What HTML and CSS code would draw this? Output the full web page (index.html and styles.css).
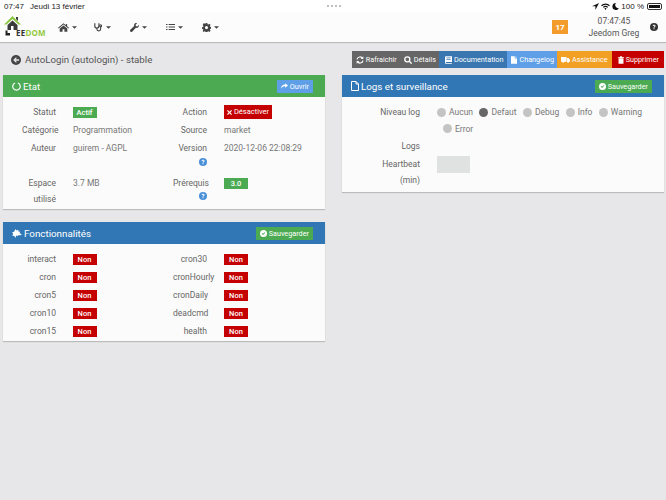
FILE: index.html
```html
<!DOCTYPE html>
<html lang="fr">
<head>
<meta charset="utf-8">
<title>AutoLogin</title>
<link rel="stylesheet" href="styles.css">
</head>
<body>
<svg class="defs" width="0" height="0" aria-hidden="true">
  <symbol id="caret" viewBox="0 0 8 4"><path d="M0 0h8L4 4z"/></symbol>
  <symbol id="help" viewBox="0 0 16 16"><circle cx="8" cy="8" r="8"/><path d="M5.200 6.200C5.400 4.400 6.600 3.500 8.200 3.500c1.700 0 2.900 1 2.900 2.400 0 1.300-.8 1.800-1.500 2.300-.5.400-.7.600-.7 1.300H7.100c0-1.300.3-1.800 1.100-2.400.6-.4.900-.7.900-1.100 0-.5-.4-.8-1-.8-.7 0-1 .4-1.100 1zM7 10.500h2v2H7z" fill="#fff"/></symbol>
  <symbol id="check" viewBox="0 0 16 16"><circle cx="8" cy="8" r="8" fill="#fff"/><path d="M4 8.300l1.500-1.500 1.600 1.600 3.400-3.400L12 6.500l-4.900 4.900z" class="check-mark"/></symbol>
</svg>

<div class="status-bar">
  <span class="status-time">07:47</span>
  <span class="status-date">Jeudi 13 février</span>
  <span class="status-dots"><i></i><i></i><i></i><i></i></span>
  <span class="status-right">
    <svg width="7" height="7" viewBox="0 0 8 8"><path d="M8 0L0 3.600h3.900V8z"/></svg>
    <svg width="9" height="7" viewBox="0 0 10 8"><path d="M0 2.600a7 7 0 0 1 10 0l-.9 1a5.700 5.700 0 0 0-8.200 0zM2 4.500a4.300 4.300 0 0 1 6 0l-.9 1a3 3 0 0 0-4.200 0zM3.700 6.300a1.800 1.800 0 0 1 2.600 0L5 8z"/></svg>
    <svg width="7" height="7" viewBox="0 0 8 8"><path d="M4.500 0a4 4 0 1 0 3.500 5.800A3.600 3.600 0 0 1 4.500 0z"/></svg>
    <span>100 %</span>
    <span class="battery"><b></b></span>
  </span>
</div>

<header class="nav">
  <div class="logo">
    <svg class="logo-mark" width="18" height="21" viewBox="0 0 18 21"><path d="M8.500 0L0 8.500h2.500L8.500 3l6 5.500H17z" fill="#8cc63f"/><path d="M3.500 9l5-4.500 5 4.500v5h-10z" fill="#3a3a3a"/><path d="M12 1h2v4l-2-2z" fill="#3a3a3a"/><path d="M1.500 14.500h2v2.500h2.500v2.500H1.500z" fill="#222"/><path d="M7 10h2.500v5H7z" fill="#fff"/></svg>
    <span class="logo-text"><span class="logo-dark">EE</span><span class="logo-green">DOM</span></span>
  </div>
  <nav class="menu">
    <span class="menu-item"><svg width="11" height="9" viewBox="0 0 13 10"><path d="M6.500 0L0 5.300l.7.800 5.800-4.700 5.800 4.700.7-.8-2.200-1.800V.8H9.300v1.500zM2 6.200V10h3.400V7.200h2.200V10H11V6.200L6.500 2.500z"/></svg><svg class="caret"><use href="#caret"/></svg></span>
    <span class="menu-item"><svg class="steth" width="9" height="10" viewBox="0 0 11 11"><path d="M1 .8v3.400a2.500 2.500 0 0 0 5 0V.8M3.500 6.700v1.300a2.300 2.300 0 0 0 4.600 0V5.500"/><circle cx="8.100" cy="4" r="1.200"/></svg><svg class="caret"><use href="#caret"/></svg></span>
    <span class="menu-item"><svg width="9" height="9" viewBox="0 0 11 11"><path d="M10.800 2.400L8.900 4.200 7.200 3.700 6.800 2 8.600.2C7 -.3 5.300.5 5 2.100c-.1.600-.1 1.100.1 1.600L.4 8.400c-.5.500-.5 1.300 0 1.900l.4.300c.5.500 1.300.5 1.800 0l4.600-4.700c1.900.6 3.600-.6 3.800-2.400 0-.8 0-1.500-.2-2.100z"/></svg><svg class="caret"><use href="#caret"/></svg></span>
    <span class="menu-item"><svg width="9" height="8" viewBox="0 0 12 10"><path d="M0 1h2v1.200H0zM0 4.400h2v1.200H0zM0 7.800h2V9H0zM3.500 1H12v1.200H3.500zM3.500 4.400H12v1.200H3.500zM3.500 7.800H12V9H3.500z"/></svg><svg class="caret"><use href="#caret"/></svg></span>
    <span class="menu-item"><svg width="9" height="9" viewBox="0 0 11 11"><path d="M4.500 0h2l.3 1.500 1 .4L9.100 1l1.400 1.400-.9 1.300.4 1 1.500.3v2l-1.500.3-.4 1 .9 1.300-1.400 1.400-1.300-.9-1 .4-.3 1.500h-2l-.3-1.500-1-.4-1.300.9L.8 9.800l.9-1.300-.4-1L0 7.100v-2l1.300-.3.400-1-.9-1.300L2.200.1l1.300.9 1-.4zM5.500 3.700a1.900 1.900 0 1 0 0 3.800 1.900 1.900 0 0 0 0-3.800z" fill-rule="evenodd"/></svg><svg class="caret"><use href="#caret"/></svg></span>
  </nav>
  <div class="nav-right">
    <span class="count">17</span>
    <div class="clock"><div>07:47:45</div><div>Jeedom Greg</div></div>
    <svg class="nav-help"><use href="#help"/></svg>
  </div>
</header>

<main class="page">
  <div class="title-row">
    <h1 class="title">
      <svg width="10" height="10" viewBox="0 0 16 16"><circle cx="8" cy="8" r="8" fill="#444"/><path d="M8 3.500l1.400 1.400-2 2H13v2.200H7.400l2 2L8 12.500 3.500 8z" fill="#e7e7e9"/></svg>
      AutoLogin (autologin) - stable
    </h1>
    <div class="actions">
      <span class="act act-grey">
        <svg width="8" height="8" viewBox="0 0 12 12" fill="none" stroke="#fff" stroke-width="1.800"><path d="M1.500 5A4.700 4.700 0 0 1 10 3.500M10.500 7A4.700 4.700 0 0 1 2 8.500"/><path d="M11 .5v4H7zM1 11.500v-4h4z" fill="#fff" stroke="none"/></svg>Rafraichir
      </span>
      <span class="act act-grey act-details">
        <svg width="8" height="8" viewBox="0 0 12 12" fill="none" stroke="#fff" stroke-width="2"><circle cx="5" cy="5" r="3.800"/><path d="M8 8l3.500 3.500"/></svg>Détails
      </span>
      <span class="act act-doc">
        <svg width="7" height="8" viewBox="0 0 10 11"><path d="M0 1.200C0 .5.500 0 1.200 0H10v8.500H1.500a.8.800 0 0 0 0 1.300H10V11H1.200C.5 11 0 10.500 0 9.800zM2 2v1h6V2zM2 4v1h6V4z" fill="#fff" fill-rule="evenodd"/></svg>Documentation
      </span>
      <span class="act act-change">
        <svg width="6" height="8" viewBox="0 0 8 10"><path d="M0 0h5v3h3v7H0zM6 0l2 2H6z" fill="#fff"/></svg>Changelog
      </span>
      <span class="act act-help">
        <svg width="9" height="7" viewBox="0 0 12 9"><path d="M0 1h7.500v6.500h-7.500zM8 2.500h2l2 2.300v2.700H8z" fill="#fff"/><circle cx="3" cy="7.500" r="1.400" fill="#fff"/><circle cx="9.500" cy="7.500" r="1.400" fill="#fff"/></svg>Assistance
      </span>
      <span class="act act-del">
        <svg width="6" height="8" viewBox="0 0 8 10"><path d="M0 1.200h2.300L3 0h2l.7 1.200H8v1H0zM.7 2.800h6.600V10H.7z" fill="#fff"/></svg>Supprimer
      </span>
    </div>
  </div>

  <div class="columns">
    <div class="col">
      <section class="panel">
        <div class="panel-head head-green">
          <h2><svg width="9" height="9" viewBox="0 0 12 12" fill="none" stroke="#fff" stroke-width="1.600"><path d="M7.800 1.300a5 5 0 1 1-3.600 0"/></svg>Etat</h2>
          <span class="btn btn-blue"><svg width="7" height="6" viewBox="0 0 10 8"><path d="M6 0l4 3.300L6 6.600V4.500C3.500 4.500 1.500 5.300 0 8c0-3.500 2-5.800 6-6z" fill="#fff"/></svg>Ouvrir</span>
        </div>
        <div class="grid grid-info">
          <div class="lbl">Statut</div>
          <div class="val"><span class="tag tag-green tag-left">Actif</span></div>
          <div class="lbl">Action</div>
          <div class="val"><span class="btn-off"><svg width="5" height="5" viewBox="0 0 8 8"><path d="M1.300 0L4 2.700 6.700 0 8 1.300 5.300 4 8 6.700 6.700 8 4 5.300 1.300 8 0 6.700 2.700 4 0 1.300z" fill="#fff"/></svg>Désactiver</span></div>

          <div class="lbl">Catégorie</div>
          <div class="val">Programmation</div>
          <div class="lbl">Source</div>
          <div class="val">market</div>

          <div class="lbl">Auteur</div>
          <div class="val">guirem - AGPL</div>
          <div class="lbl lbl-tall">Version<svg class="q"><use href="#help"/></svg></div>
          <div class="val">2020-12-06 22:08:29</div>

          <div class="lbl">Espace utilisé</div>
          <div class="val">3.7 MB</div>
          <div class="lbl lbl-tall">Prérequis<svg class="q"><use href="#help"/></svg></div>
          <div class="val"><span class="tag tag-green">3.0</span></div>
        </div>
      </section>

      <section class="panel">
        <div class="panel-head head-blue">
          <h2><svg width="10" height="9" viewBox="0 0 12 11"><path d="M4 0l1.200 1.800L7.500.8 7.800 3l2.200.3-1 2L12 6.500 9.500 8 8.500 7 7 8.500 5 7.800 4 11 2.800 8.700 0 8l1.500-2L0 4l2.500-.5z" fill="#fff"/></svg>Fonctionnalités</h2>
          <span class="btn btn-green"><svg class="ok"><use href="#check"/></svg>Sauvegarder</span>
        </div>
        <div class="grid grid-info">
          <div class="lbl">interact</div><div class="val"><span class="tag tag-red tag-left">Non</span></div>
          <div class="lbl">cron30</div><div class="val"><span class="tag tag-red">Non</span></div>
          <div class="lbl">cron</div><div class="val"><span class="tag tag-red tag-left">Non</span></div>
          <div class="lbl">cronHourly</div><div class="val"><span class="tag tag-red">Non</span></div>
          <div class="lbl">cron5</div><div class="val"><span class="tag tag-red tag-left">Non</span></div>
          <div class="lbl">cronDaily</div><div class="val"><span class="tag tag-red">Non</span></div>
          <div class="lbl">cron10</div><div class="val"><span class="tag tag-red tag-left">Non</span></div>
          <div class="lbl">deadcmd</div><div class="val"><span class="tag tag-red">Non</span></div>
          <div class="lbl">cron15</div><div class="val"><span class="tag tag-red tag-left">Non</span></div>
          <div class="lbl">health</div><div class="val"><span class="tag tag-red">Non</span></div>
        </div>
      </section>
    </div>

    <div class="col">
      <section class="panel">
        <div class="panel-head head-blue">
          <h2><svg width="8" height="10" viewBox="0 0 8 10" fill="none" stroke="#fff" stroke-width="1"><path d="M.5.500h4.500l2.500 2.500v6.500h-7z"/><path d="M5 .5V3h2.500"/></svg>Logs et surveillance</h2>
          <span class="btn btn-green"><svg class="ok"><use href="#check"/></svg>Sauvegarder</span>
        </div>
        <div class="log-form">
          <div class="log-lbl">Niveau log</div>
          <div class="radios">
            <span class="radio"><i></i>Aucun</span>
            <span class="radio on"><i></i>Defaut</span>
            <span class="radio"><i></i>Debug</span>
            <span class="radio"><i></i>Info</span>
            <span class="radio"><i></i>Warning</span>
            <span class="radio radio-last"><i></i>Error</span>
          </div>
          <div class="log-lbl">Logs</div>
          <div></div>
          <div class="log-lbl">Heartbeat (min)</div>
          <div><span class="field"></span></div>
        </div>
      </section>
    </div>
  </div>
</main>
</body>
</html>
```
FILE: styles.css
```css
* { box-sizing: border-box; }
html, body { margin: 0; height: 100%; }
body {
  background: #e7e7e9;
  font-family: Roboto, "Liberation Sans", sans-serif;
  font-size: 8.500px;
  color: #666;
  overflow: hidden;
}
.defs { position: absolute; }

.status-bar {
  height: 12px;
  background: #fff;
  display: flex;
  align-items: center;
  padding: 0 4px;
  color: #222;
  font-family: "Liberation Sans", sans-serif;
  font-size: 8px;
  position: relative;
}
.status-date { margin-left: 6px; }
.status-dots { position: absolute; left: 327px; top: 5px; display: flex; gap: 2px; }
.status-dots i { width: 2px; height: 2px; border-radius: 50%; background: #aaa; }
.status-right { margin-left: auto; display: flex; align-items: center; gap: 2px; }
.status-right svg { fill: #111; }
.battery { display: inline-block; width: 15px; height: 7px; border: 1px solid #333; border-radius: 2px; padding: 1px; margin-left: 1px; }
.battery b { display: block; height: 100%; background: #111; }

.nav {
  height: 30px;
  background: #fcfcfc;
  display: flex;
  align-items: center;
  box-shadow: 0 1px 1px #bbb;
  padding-left: 4px;
}
.logo { width: 44px; height: 21px; position: relative; margin-top: -2px; flex: none; }
.logo-mark { display: block; }
.logo-text {
  position: absolute;
  left: 12px;
  bottom: 0;
  font-size: 8px;
  line-height: 9px;
  font-weight: 700;
  letter-spacing: .2px;
  font-family: "Open Sans", sans-serif;
}
.logo-dark { color: #333; }
.logo-green { color: #93c83d; }
.menu { display: flex; margin-left: 10px; }
.menu-item { display: flex; align-items: center; gap: 3px; width: 36px; }
.menu-item svg { fill: #444; flex: none; }
.menu-item .steth { fill: none; stroke: #444; stroke-width: 1.400; }
.menu-item .caret { width: 5px; height: 3px; }
.nav-right { margin-left: auto; display: flex; align-items: center; padding-right: 8px; }
.count {
  width: 16px; height: 14px;
  background: #f39c2c;
  color: #fff;
  font-size: 8px;
  font-weight: 700;
  display: flex; align-items: center; justify-content: center;
}
.clock { width: 60px; margin: 0 6px 0 16px; text-align: center; line-height: 12px; font-size: 8.500px; color: #555; }
.nav-help { width: 8px; height: 8px; fill: #333; }

.page { padding: 9px 2px 0 3px; }
.title-row { display: flex; align-items: center; justify-content: space-between; height: 17px; padding-left: 8px; }
.title { margin: 0; font-size: 9.700px; font-weight: 400; color: #555; display: flex; align-items: center; gap: 4px; }
.actions { display: flex; height: 17px; }
.act { display: flex; align-items: center; gap: 2px; color: #fff; font-size: 7.250px; padding: 0 3px; white-space: nowrap; }
.act-grey { background: #666; }
.act-grey:first-child { padding-left: 4px; padding-right: 4px; }
.act-details { padding-right: 3px; }
.act-doc { background: #3a77b0; padding: 0 4px 0 6px; }
.act-change { background: #5f9fe8; padding: 0 3px 0 4px; }
.act-help { background: #f2a024; padding: 0 4px 0 4px; }
.act-del { background: #c40000; padding: 0 5px 0 6px; }

.columns { display: grid; grid-template-columns: 322px 322px; column-gap: 17px; margin-top: 7px; }
.panel { background: #fbfbfb; box-shadow: 0 1px 1px #bbb; margin-bottom: 13px; }
.panel-head { height: 22px; display: flex; align-items: center; justify-content: space-between; padding: 0 12px 0 9px; }
.head-green { background: #4cab52; }
.head-blue { background: #3277b5; }
.panel-head h2 { margin: 0; color: #fff; font-size: 9.800px; font-weight: 400; display: flex; align-items: center; gap: 2px; }
.btn { height: 13px; display: flex; align-items: center; gap: 2px; padding: 0 4px; color: #fff; font-size: 7.250px; white-space: nowrap; }
.btn-blue { background: #5f9fe8; }
.btn-green { background: #4cab52; }
.ok { width: 7px; height: 7px; }
.check-mark { fill: #4cab52; }

.grid-info {
  display: grid;
  grid-template-columns: 34px 83px 34px 1fr;
  column-gap: 17px;
  padding: 6px 0 1px 19px;
  grid-auto-rows: minmax(18px, auto);
}
.lbl { text-align: right; line-height: 16.500px; padding-top: 1px; color: #666; }
.lbl-tall { min-height: 34.500px; }
.val { line-height: 16.500px; padding-top: 1px; color: #777; white-space: nowrap; display: flex; align-items: flex-start; }
.q { display: block; width: 8px; height: 8px; fill: #4a90d9; margin: 1px 0 0 26px; }
.tag { width: 24px; height: 11px; margin-top: 3px; display: flex; align-items: center; justify-content: center; color: #fff; font-size: 7.500px; line-height: 11px; font-weight: 500; }
.tag-left { margin-left: -.5px; }
.tag-green { background: #4cab52; }
.tag-red { background: #c40000; }
.btn-off { height: 14px; width: 48px; margin-top: 1px; background: #c40000; color: #fff; font-size: 7.500px; line-height: 14px; display: flex; align-items: center; justify-content: center; gap: 2px; }

.log-form { display: grid; grid-template-columns: 40px 1fr; column-gap: 17px; padding: 6px 0 3px 38px; }
.log-lbl { text-align: right; line-height: 16.500px; padding-top: 1px; color: #666; }
.log-lbl:first-child { white-space: nowrap; }
.radios { display: flex; flex-wrap: wrap; width: 220px; min-height: 34px; padding-top: 1px; }
.radio { display: flex; align-items: center; gap: 3px; height: 16px; margin-right: 6.400px; color: #777; }
.radio i { width: 9px; height: 9px; border-radius: 50%; background: #c4c4c4; }
.radio.on i { background: #666; }
.radio-last { margin-left: 6px; }
.field { display: block; width: 33px; height: 17px; background: #e0e2e1; margin-top: 1px; }
```
